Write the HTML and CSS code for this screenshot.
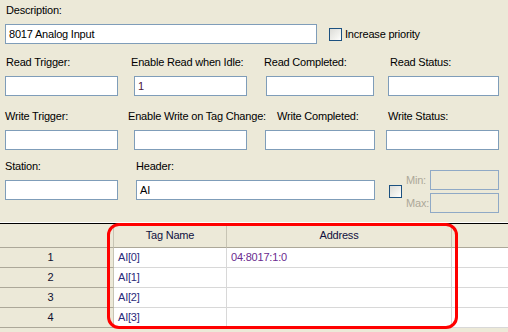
FILE: index.html
```html
<!DOCTYPE html>
<html>
<head>
<meta charset="utf-8">
<link rel="stylesheet" href="styles.css">
</head>
<body>
<div class="form">
  <div class="label desc-label">Description:</div>
  <div class="row row1">
    <div class="input desc-input">8017 Analog Input</div>
    <div class="check"><span class="box"></span><span class="check-text">Increase priority</span></div>
  </div>

  <div class="row row2">
    <div class="field w113"><div class="label l-r1">Read Trigger:</div><div class="input"></div></div>
    <div class="field w113 ml16"><div class="label l-r2">Enable Read when Idle:</div><div class="input val-red">1</div></div>
    <div class="field w108 ml19"><div class="label l-r3">Read Completed:</div><div class="input"></div></div>
    <div class="field w111 ml14"><div class="label l-r4">Read Status:</div><div class="input"></div></div>
  </div>

  <div class="row row3">
    <div class="field w113"><div class="label">Write Trigger:</div><div class="input"></div></div>
    <div class="field w113 ml16"><div class="label l-w2">Enable Write on Tag Change:</div><div class="input"></div></div>
    <div class="field w110 ml18"><div class="label l-w3">Write Completed:</div><div class="input"></div></div>
    <div class="field w113 ml11"><div class="label l-w4">Write Status:</div><div class="input"></div></div>
  </div>

  <div class="row row4">
    <div class="field w113"><div class="label">Station:</div><div class="input"></div></div>
    <div class="field w239 ml18"><div class="label">Header:</div><div class="input">AI</div></div>
    <div class="range">
      <span class="box"></span>
      <div class="range-fields">
        <div class="range-row"><span class="range-label">Min:</span><div class="input disabled"></div></div>
        <div class="range-row"><span class="range-label">Max:</span><div class="input disabled"></div></div>
      </div>
    </div>
  </div>
</div>

<div class="grid-wrap">
  <div class="splitter"></div>
  <div class="grid">
    <div class="hcell corner"></div>
    <div class="hcell">Tag Name</div>
    <div class="hcell">Address</div>
    <div class="hcell filler"></div>

    <div class="rowhdr">1</div>
    <div class="cell tag">AI[0]</div>
    <div class="cell addr">04:8017:1:0</div>
    <div class="cell filler"></div>

    <div class="rowhdr">2</div>
    <div class="cell tag">AI[1]</div>
    <div class="cell addr"></div>
    <div class="cell filler"></div>

    <div class="rowhdr">3</div>
    <div class="cell tag">AI[2]</div>
    <div class="cell addr"></div>
    <div class="cell filler"></div>

    <div class="rowhdr">4</div>
    <div class="cell tag">AI[3]</div>
    <div class="cell addr"></div>
    <div class="cell filler"></div>
  </div>
  <div class="highlight"></div>
</div>
</body>
</html>
```

FILE: styles.css
```css
html, body {
  margin: 0;
  padding: 0;
}
body {
  width: 508px;
  height: 332px;
  overflow: hidden;
  background: #ECE9D8;
  font-family: "Liberation Sans", Arial, sans-serif;
  font-size: 11px;
  letter-spacing: -0.2px;
  color: #000;
}
.form {
  padding: 4px 0 0 5px;
  height: 213px;
  box-sizing: border-box;
}
.label {
  height: 13px;
  line-height: 13px;
  white-space: nowrap;
}
.desc-label {
  padding-left: 1px;
}
.row {
  display: flex;
}
.row1 {
  margin-top: 7px;
  align-items: center;
}
.row2 {
  margin-top: 12px;
}
.row3 {
  margin-top: 14px;
}
.row4 {
  margin-top: 10px;
}
.field {
  display: flex;
  flex-direction: column;
  gap: 7px;
}
.input {
  box-sizing: border-box;
  height: 20px;
  border: 1px solid #7F9DB9;
  background: #fff;
  line-height: 18px;
  padding-left: 3px;
  white-space: nowrap;
}
.desc-input {
  width: 312px;
}
.val-red {
  color: #4a1438;
}
.w108 { width: 108px; }
.w110 { width: 110px; }
.w111 { width: 111px; }
.w113 { width: 113px; }
.w239 { width: 239px; }
.ml11 { margin-left: 11px; }
.ml14 { margin-left: 14px; }
.ml16 { margin-left: 16px; }
.ml18 { margin-left: 18px; }
.ml19 { margin-left: 19px; }
.l-r1 { margin-left: 1px; }
.l-r2 { margin-left: -3px; }
.l-r3 { margin-left: -2px; }
.l-r4 { margin-left: 2px; }
.l-w2 { margin-left: -6px; }
.l-w3 { margin-left: 12px; }
.l-w4 { margin-left: 2px; }

.check {
  display: flex;
  align-items: center;
  margin-left: 12px;
}
.box {
  display: block;
  box-sizing: border-box;
  width: 13px;
  height: 13px;
  border: 1px solid #1C5180;
  background: linear-gradient(135deg, #DCDCD7 0%, #F4F4F0 70%, #fff 100%);
  flex: none;
}
.check-text {
  margin-left: 3px;
}
.range {
  display: flex;
  align-items: center;
  margin-top: 10px;
  margin-left: 14px;
}
.range-fields {
  display: flex;
  flex-direction: column;
  gap: 3px;
  margin-left: 4px;
}
.range-row {
  display: flex;
  align-items: center;
}
.range-label {
  width: 24px;
  color: #ACA899;
}
.input.disabled {
  width: 69px;
  background: #ECE9D8;
  border-color: #8FA9C6;
}

.grid-wrap {
  position: relative;
}
.splitter {
  margin-top: 9px;
  height: 1px;
  border-top: 1px solid #fff;
  background: #000;
  box-sizing: content-box;
}
.grid {
  display: grid;
  grid-template-columns: 114px 113px 225px 1fr;
  grid-template-rows: 24px repeat(4, 20px);
}
.hcell {
  box-sizing: border-box;
  background: #ECE9D8;
  border-right: 1px solid #C7C4B4;
  border-bottom: 1px solid #ACA899;
  text-align: center;
  line-height: 23px;
  color: #101040;
}
.hcell.filler {
  border-right: none;
}
.rowhdr {
  box-sizing: border-box;
  background: #ECE9D8;
  border-right: 1px solid #C7C4B4;
  border-bottom: 1px solid #ACA899;
  text-align: center;
  padding-right: 12px;
  line-height: 19px;
  color: #101030;
}
.cell {
  box-sizing: border-box;
  background: #fff;
  border-right: 1px solid #D8D8D8;
  border-bottom: 1px solid #D8D8D8;
  padding-left: 4px;
  line-height: 19px;
  white-space: nowrap;
}
.cell.filler {
  border-right: none;
}
.tag {
  color: #2B2B7A;
}
.addr {
  color: #6A2A8E;
}
.highlight {
  position: absolute;
  left: 107px;
  top: 1px;
  width: 351px;
  height: 106px;
  box-sizing: border-box;
  border: 3px solid #FF0000;
  border-radius: 12px;
}
```
